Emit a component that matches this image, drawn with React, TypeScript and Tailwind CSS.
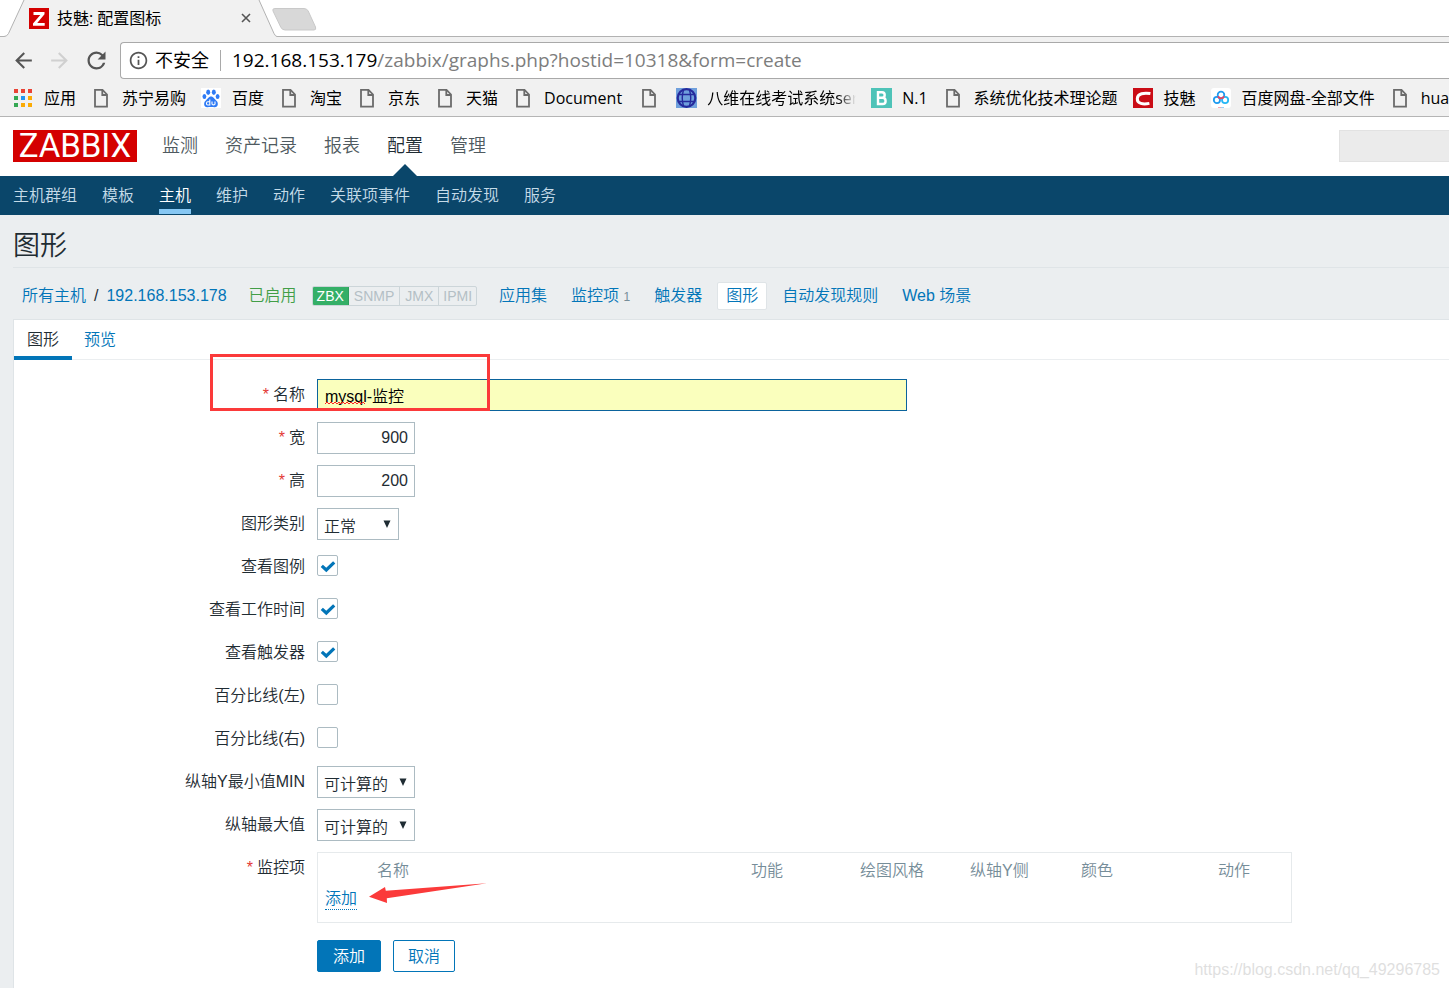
import type { ReactNode } from "react";
import { MdArrowBack, MdArrowForward, MdInfoOutline, MdRefresh } from "react-icons/md";

const browserFont = "font-['Open_Sans','Noto_Sans_CJK_SC',sans-serif]";
const pageFont = "font-['Liberation_Sans','Noto_Sans_CJK_SC',sans-serif]";

function PageIcon() {
  return (
    <svg width="14" height="20" viewBox="0 0 14 20" fill="none" aria-hidden="true">
      <path d="M1 1.8H8.5L13 6.5V18.6H1Z" stroke="#6b6b6b" strokeWidth="1.8" />
      <path d="M8.3 2V7H13" stroke="#6b6b6b" strokeWidth="1.8" />
    </svg>
  );
}

function AppsIcon() {
  const colors = [
    ["#ea4335", "#ea4335", "#ea4335"],
    ["#34a853", "#2196f3", "#fbab05"],
    ["#34a853", "#fbab05", "#fbab05"],
  ];
  return (
    <svg width="18" height="18" viewBox="0 0 18 18" aria-hidden="true">
      {colors.map((row, y) =>
        row.map((fill, x) => <rect key={`${x}-${y}`} x={x * 7} y={y * 7} width="4" height="4" fill={fill} />)
      )}
    </svg>
  );
}

function PawIcon() {
  return (
    <svg width="20" height="20" viewBox="0 0 20 20" aria-hidden="true">
      <rect width="20" height="20" fill="#fff" />
      <g fill="#2f7bf5">
        <ellipse cx="7.2" cy="4.2" rx="2" ry="2.7" />
        <ellipse cx="12.8" cy="4.2" rx="2" ry="2.7" />
        <ellipse cx="3.4" cy="8.6" rx="1.9" ry="2.5" />
        <ellipse cx="16.6" cy="8.6" rx="1.9" ry="2.5" />
        <path d="M10 8.6C12.6 8.6 13.4 11.2 15.4 12.8C17.8 14.8 17.2 19.4 13.6 19.2C11.4 19 8.6 19 6.4 19.2C2.8 19.4 2.2 14.8 4.6 12.8C6.6 11.2 7.4 8.6 10 8.6Z" />
      </g>
      <path d="M8.8 11.6V17H6.8C5 17 5 13.8 6.8 13.8H8.8M11 13.6V16C11 17.2 14 17.2 14 16V13.6" fill="none" stroke="#fff" strokeWidth="1.1" />
    </svg>
  );
}

function GlobeIcon() {
  return (
    <svg width="21" height="20" viewBox="0 0 21 20" className="shrink-0" aria-hidden="true">
      <rect width="21" height="20" fill="#6f9fdc" />
      <g fill="none" stroke="#262a9c" strokeWidth="1.4">
        <circle cx="10.5" cy="10" r="8.8" strokeWidth="2.2" />
        <path d="M7.500 2Q5 10 7.500 18M13.500 2Q16 10 13.500 18M3 6.500H18M3 13.500H18" />
      </g>
    </svg>
  );
}

function LetterBIcon() {
  return (
    <svg width="21" height="20" viewBox="0 0 21 20" className="shrink-0" aria-hidden="true">
      <rect width="21" height="20" fill="#4ec3b8" />
      <path d="M7 4.3H11C14.6 4.3 14.6 9.8 11 9.8H7ZM7 9.8H11.6C15.6 9.8 15.6 16 11.6 16H7Z" fill="none" stroke="#fff" strokeWidth="2.4" />
    </svg>
  );
}

function CrescentIcon() {
  return (
    <svg width="20" height="20" viewBox="0 0 20 20" aria-hidden="true">
      <rect width="20" height="20" fill="#ca0c16" />
      <path d="M17.400 5.600C11 4.600 4.600 5.400 4.300 10.600C4 15.800 10 16.600 16.400 15.400" fill="none" stroke="#fff" strokeWidth="3" />
    </svg>
  );
}

function CloudDriveIcon() {
  return (
    <svg width="20" height="20" viewBox="0 0 20 20" fill="none" aria-hidden="true">
      <rect width="20" height="20" rx="3" fill="#fff" />
      <circle cx="10" cy="7" r="3.3" stroke="#1e9bf0" strokeWidth="1.8" />
      <circle cx="5.9" cy="12" r="3.1" stroke="#1e9bf0" strokeWidth="1.8" />
      <circle cx="14.1" cy="12" r="3.1" stroke="#25b7f5" strokeWidth="1.8" />
      <path d="M7 8.300Q7.600 10.200 10 10.300Q12.400 10.200 13 8.300" stroke="#f0405a" strokeWidth="1.800" />
      <path d="M7 19.5H10" stroke="#f3a9b4" />
      <path d="M10 19.5H13" stroke="#9bd0f7" />
    </svg>
  );
}

const bookmarks: { icon: ReactNode; text?: string; fade?: boolean }[] = [
  { icon: <PageIcon />, text: "苏宁易购" },
  { icon: <PawIcon />, text: "百度" },
  { icon: <PageIcon />, text: "淘宝" },
  { icon: <PageIcon />, text: "京东" },
  { icon: <PageIcon />, text: "天猫" },
  { icon: <PageIcon />, text: "Document" },
  { icon: <PageIcon /> },
  { icon: <GlobeIcon />, text: "八维在线考试系统ser", fade: true },
  { icon: <LetterBIcon />, text: "N.1" },
  { icon: <PageIcon />, text: "系统优化技术理论题" },
  { icon: <CrescentIcon />, text: "技魅" },
  { icon: <CloudDriveIcon />, text: "百度网盘-全部文件" },
  { icon: <PageIcon />, text: "hua" },
];

function BrowserChrome() {
  return (
    <div className={`${browserFont} font-normal text-black`}>
      <div className="flex h-9 bg-white">
        <div className="relative flex h-9 w-[276px] shrink-0 items-center pl-[29px] pr-[25px]">
          <svg className="absolute top-0 left-0" width="277" height="37" viewBox="0 0 277 37" aria-hidden="true">
            <path d="M0 36.5H4Q7 36.5 8.5 33.5L24 0H259L274 33.5Q275.500 36.5 277 36.5V37H0Z" fill="#f1f1f1" />
            <path d="M0 36.500H4Q7 36.500 8.500 33.500L24 0M259 0L274 33.500Q275.500 36.500 277 36.500" fill="none" stroke="#b2b2b2" />
          </svg>
          <svg className="relative mr-2" width="20" height="21" viewBox="0 0 20 21" aria-hidden="true">
            <rect width="20" height="21" fill="#d40000" />
            <path d="M4.500 4H15.500V6.300L8.200 15H15.700V17.800H4V15.500L11.300 6.900H4.500Z" fill="#fff" />
          </svg>
          <span className="relative flex-1 text-base leading-5 whitespace-nowrap">技魅: 配置图标</span>
          <button type="button" aria-label="关闭" className="relative">
            <svg width="10" height="10" viewBox="0 0 10 10" aria-hidden="true">
              <path d="M1 1L9 9M9 1L1 9" stroke="#555" strokeWidth="1.600" />
            </svg>
          </button>
        </div>
        <svg className="mt-2 -ml-1" width="46" height="23" viewBox="0 0 46 23" aria-hidden="true">
          <path d="M3 .5H32Q35 .5 36.200 3L43.500 19Q44.500 22 42 22H13Q10 22 8.700 19L1 3Q0 .5 3 .5Z" fill="#d8d8d8" stroke="#c9c9c9" />
        </svg>
      </div>

      <div className="border-t border-b border-t-[#b2b2b2] border-b-[#b5b5b5] bg-[#f1f1f1]">
        <div className="flex items-center pt-[5px]">
          <div className="flex w-[120px] shrink-0 items-center gap-[11px] pl-[11px] text-[#555]">
            <button type="button" aria-label="后退"><MdArrowBack size={25} /></button>
            <button type="button" aria-label="前进" className="text-[#d0d0d0]"><MdArrowForward size={25} /></button>
            <button type="button" aria-label="重新加载"><MdRefresh size={27} /></button>
          </div>
          <div className="flex h-[37px] min-w-0 flex-1 items-center rounded-l border border-r-0 border-[#a9a9a9] bg-white pl-[7px]">
            <MdInfoOutline size={21} className="shrink-0 text-[#555]" />
            <span className="ml-[6px] pb-px text-lg leading-6 whitespace-nowrap">不安全</span>
            <span className="mx-[11px] h-[21px] w-px bg-[#a9a9a9]" />
            <span className="pb-px text-[19px] leading-6 whitespace-nowrap">
              192.168.153.179<span className="text-[#7d7d7d]">/zabbix/graphs.php?hostid=10318&amp;form=create</span>
            </span>
          </div>
        </div>
        <nav className="flex h-[37px] items-center gap-[15px] overflow-hidden pl-[14px] text-base leading-5">
          <a href="#apps" className="flex shrink-0 items-center gap-3">
            <AppsIcon />
            应用
          </a>
          {bookmarks.map((b, i) => (
            <a key={i} href="#bookmark" aria-label={b.text ?? "书签"} className="flex min-w-6 shrink-0 items-center justify-center gap-[11px]">
              <span className="flex w-5 justify-center">{b.icon}</span>
              {b.text && (
                <span
                  className={
                    b.fade
                      ? "w-[149px] overflow-hidden whitespace-nowrap [mask-image:linear-gradient(to_right,#000_88%,transparent)]"
                      : "whitespace-nowrap"
                  }
                >
                  {b.text}
                </span>
              )}
            </a>
          ))}
        </nav>
      </div>
    </div>
  );
}

const mainMenu = ["监测", "资产记录", "报表", "配置", "管理"];
const subMenu = ["主机群组", "模板", "主机", "维护", "动作", "关联项事件", "自动发现", "服务"];

function Header() {
  return (
    <header>
      <div className="flex h-[59px] items-start bg-white pl-[13px]">
        <a
          href="#home"
          className="mt-[13px] flex h-8 w-[124px] items-center justify-center bg-[#d40000] font-[Roboto,sans-serif] text-[33px] leading-8 font-normal text-white"
        >
          ZABBIX
        </a>
        <nav className="ml-[25px] flex h-full gap-[27px] text-lg text-[#4f5a60]">
          {mainMenu.map((m) => (
            <a key={m} href="#menu" className={m === "配置" ? "relative flex items-center pb-[2px] text-[#1f2c33]" : "flex items-center pb-[2px]"}>
              {m}
              {m === "配置" && (
                <svg className="absolute bottom-0 left-[6px]" width="24" height="12" viewBox="0 0 24 12" aria-hidden="true">
                  <path d="M0 12L12 0L24 12Z" fill="#0a466a" />
                </svg>
              )}
            </a>
          ))}
        </nav>
        <input aria-label="搜索" disabled className="mt-[13px] ml-auto h-8 w-[110px] border border-r-0 border-[#e2e2e2] bg-[#ebebeb]" />
      </div>
      <nav className="flex h-[39px] gap-[25px] bg-[#0a466a] pb-px pl-[13px] text-base text-[#c5dbe8]">
        {subMenu.map((m) => (
          <a
            key={m}
            href="#submenu"
            className={
              m === "主机"
                ? "flex items-center border-t-7 border-b-5 border-t-transparent border-b-[#86c7f3] text-white"
                : "flex items-center pt-[2px]"
            }
          >
            {m}
          </a>
        ))}
      </nav>
    </header>
  );
}

function HostBar() {
  return (
    <div className="flex h-[51px] items-center pt-[5px] pl-[22px] text-base whitespace-nowrap text-[#0275b8]">
      <a href="#hosts">所有主机</a>
      <span className="mx-2 text-[#1f2c33]">/</span>
      <a href="#host">192.168.153.178</a>
      <span className="ml-[22px] text-[#429e47]">已启用</span>
      <span className="ml-[15px] flex overflow-hidden rounded-xs border border-[#ccd5d9] text-sm leading-[18px] text-[#b4bfc5]">
        <span className="-my-px -ml-px border border-[#2f9f5e] bg-[#34af67] px-1 text-white">ZBX</span>
        <span className="border-r border-[#ccd5d9] px-[5px]">SNMP</span>
        <span className="border-r border-[#ccd5d9] px-[5px]">JMX</span>
        <span className="px-1">IPMI</span>
      </span>
      <nav className="ml-[22px] flex items-center gap-6">
        <a href="#applications">应用集</a>
        <a href="#items">
          监控项 <span className="text-xs text-[#768d99]">1</span>
        </a>
        <a href="#triggers">触发器</a>
        <a href="#graphs" className="-mx-[9px] rounded-xs border border-[#dfe4e7] bg-white px-2 leading-[26px]">
          图形
        </a>
        <a href="#discovery">自动发现规则</a>
        <a href="#web">Web 场景</a>
      </nav>
    </div>
  );
}

function Row({ label, id, required, children }: { label: string; id?: string; required?: boolean; children: ReactNode }) {
  return (
    <div className="relative grid grid-cols-[291px_minmax(0,1fr)] gap-3">
      <label htmlFor={id} className="text-right leading-8">
        {required && <span className="mr-1 text-[#e33734]">*</span>}
        {label}
      </label>
      <div className="min-h-8">{children}</div>
    </div>
  );
}

function Check({ label, id, checked }: { label: string; id: string; checked?: boolean }) {
  return (
    <Row label={label} id={id}>
      <span className="relative mt-1 block size-[21px]">
        <input
          id={id}
          type="checkbox"
          defaultChecked={checked}
          className="peer block size-full appearance-none rounded-xs border border-[#acbbc2] bg-white"
        />
        <svg
          className="pointer-events-none absolute inset-0 hidden peer-checked:block"
          width="21"
          height="21"
          viewBox="0 0 21 21"
          aria-hidden="true"
        >
          <path d="M4.800 10.800L9.300 15L17.200 7.400" fill="none" stroke="#0275b8" strokeWidth="3.200" />
        </svg>
      </span>
    </Row>
  );
}

function Select({ id, value, width }: { id: string; value: string; width: string }) {
  return (
    <span className={`relative block ${width}`}>
      <select id={id} className="block h-8 w-full appearance-none border border-[#acbbc2] bg-white pt-[6px] pl-[6px] text-base text-[#1f2c33]">
        <option>{value}</option>
      </select>
      <svg className="pointer-events-none absolute top-3 right-2" width="8" height="8" viewBox="0 0 8 8" aria-hidden="true">
        <path d="M.5 .5H7.500L4 8Z" fill="#1f2c33" />
      </svg>
    </span>
  );
}

function GraphForm() {
  const numberClass = "block h-8 w-[98px] border border-[#acbbc2] bg-white px-[6px] text-right text-base";
  return (
    <form className="flex flex-col gap-[11px] pt-[19px] pb-4" onSubmit={(e) => e.preventDefault()}>
      <Row label="名称" id="name" required>
        <span className="relative block max-w-[590px]">
          <input
            id="name"
            type="text"
            defaultValue="mysql-监控"
            spellCheck={false}
            className="block h-8 w-full border border-[#0b639c] bg-[#faffbd] px-[7px] text-base text-black"
          />
          <svg className="pointer-events-none absolute top-[22px] left-2" width="41" height="4" viewBox="0 0 41 4" aria-hidden="true">
            <path
              d="M0 3L2 1L4 3L6 1L8 3L10 1L12 3L14 1L16 3L18 1L20 3L22 1L24 3L26 1L28 3L30 1L32 3L34 1L36 3L38 1L40 3"
              fill="none"
              stroke="#f22"
            />
          </svg>
        </span>
        <span className="pointer-events-none absolute -top-[25px] left-[196px] h-[57px] w-[280px] border-3 border-[#fb3a3a]" />
      </Row>
      <Row label="宽" id="width" required>
        <input id="width" type="text" defaultValue="900" className={numberClass} />
      </Row>
      <Row label="高" id="height" required>
        <input id="height" type="text" defaultValue="200" className={numberClass} />
      </Row>
      <Row label="图形类别" id="type">
        <Select id="type" value="正常" width="w-[82px]" />
      </Row>
      <Check label="查看图例" id="legend" checked />
      <Check label="查看工作时间" id="worktime" checked />
      <Check label="查看触发器" id="triggers" checked />
      <Check label="百分比线(左)" id="left" />
      <Check label="百分比线(右)" id="right" />
      <Row label="纵轴Y最小值MIN" id="ymin">
        <Select id="ymin" value="可计算的" width="w-[98px]" />
      </Row>
      <Row label="纵轴最大值" id="ymax">
        <Select id="ymax" value="可计算的" width="w-[98px]" />
      </Row>
      <Row label="监控项" id="add-item" required>
        <div className="relative mb-[6px] h-[71px] max-w-[975px] border border-[#e6eaec]">
          <table className="w-full table-fixed border-collapse text-left">
            <thead>
              <tr className="h-9 text-[#768d99] *:font-[350]">
                <th className="w-[433px] pl-[59px]">名称</th>
                <th className="w-[109px]">功能</th>
                <th className="w-[110px]">绘图风格</th>
                <th className="w-[111px]">纵轴Y侧</th>
                <th className="w-[137px]">颜色</th>
                <th>动作</th>
              </tr>
            </thead>
            <tbody>
              <tr>
                <td colSpan={6} className="pl-[7px]">
                  <button id="add-item" type="button" className="block border-b border-dotted border-[#0275b8] leading-5 text-[#0275b8]">
                    添加
                  </button>
                </td>
              </tr>
            </tbody>
          </table>
          <svg className="pointer-events-none absolute top-[29px] left-[51px]" width="119" height="22" viewBox="0 0 119 22" aria-hidden="true">
            <path d="M0 14.700L16 5L16.800 8.700L118 1.300L17.800 16.300L18 21Z" fill="#fb3a3a" />
          </svg>
        </div>
      </Row>
      <div className="flex gap-3 pl-[303px]">
        <button type="submit" className="h-8 rounded-xs border border-[#0275b8] bg-[#0275b8] px-[15px] pt-px text-white">添加</button>
        <button type="button" className="h-8 rounded-xs border border-[#0275b8] bg-white px-[14px] pt-px text-[#0275b8]">取消</button>
      </div>
    </form>
  );
}

export default function App() {
  return (
    <div className={`${pageFont} relative flex min-h-screen flex-col overflow-hidden bg-[#ebeef0] text-base font-[350] text-[#1f2c33]`}>
      <BrowserChrome />
      <Header />
      <h1 className="ml-[13px] border-b border-[#dfe4e7] pt-[15px] pb-[5px] text-[27px] leading-8 font-[350]">图形</h1>
      <HostBar />
      <main className="ml-[13px] flex-1 border-t border-l border-[#dfe4e7] bg-white">
        <div className="flex items-start border-b border-[#ebeef0]">
          <button type="button" className="-mb-px border-b-4 border-[#0275b8] px-[13px] pt-1 leading-8">图形</button>
          <button type="button" className="px-3 pt-1 leading-8 text-[#0275b8]">预览</button>
        </div>
        <GraphForm />
      </main>
      <span className="pointer-events-none absolute right-[9px] bottom-2 text-base leading-5 text-[#dfdfdf]">
        https://blog.csdn.net/qq_49296785
      </span>
    </div>
  );
}
